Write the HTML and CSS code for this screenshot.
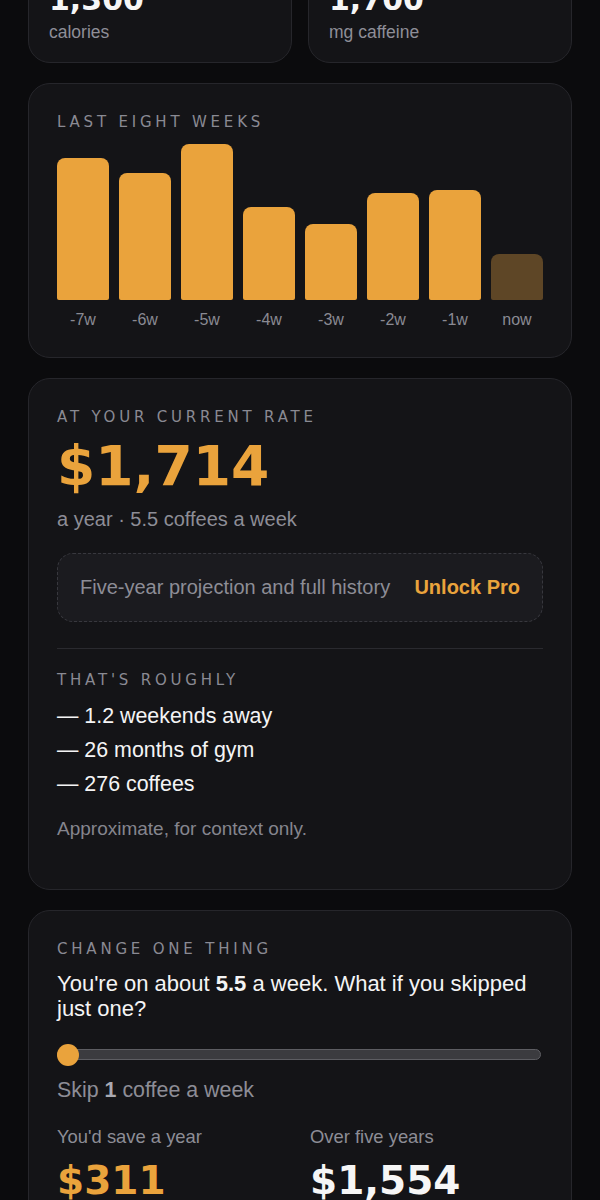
FILE: index.html
```html
<!DOCTYPE html>
<html lang="en">
<head>
<meta charset="utf-8">
<title>Coffee</title>
<link rel="stylesheet" href="styles.css">
</head>
<body>
<main class="page">
  <section class="stats">
    <div class="card stat">
      <div class="stat-num">1,300</div>
      <div class="stat-label">calories</div>
    </div>
    <div class="card stat">
      <div class="stat-num">1,700</div>
      <div class="stat-label">mg caffeine</div>
    </div>
  </section>

  <section class="card panel chart-card">
    <h2 class="label">Last eight weeks</h2>
    <div class="bars">
      <div class="bar" style="height:142px"></div>
      <div class="bar" style="height:127px"></div>
      <div class="bar" style="height:156px"></div>
      <div class="bar" style="height:93px"></div>
      <div class="bar" style="height:76px"></div>
      <div class="bar" style="height:107px"></div>
      <div class="bar" style="height:110px"></div>
      <div class="bar bar-now" style="height:46px"></div>
    </div>
    <div class="ticks">
      <span>-7w</span><span>-6w</span><span>-5w</span><span>-4w</span>
      <span>-3w</span><span>-2w</span><span>-1w</span><span>now</span>
    </div>
  </section>

  <section class="card panel rate-card">
    <h2 class="label">At your current rate</h2>
    <div class="big">$1,714</div>
    <p class="sub">a year · 5.5 coffees a week</p>
    <div class="pro">
      <span class="pro-text">Five-year projection and full history</span>
      <span class="pro-link">Unlock Pro</span>
    </div>
    <div class="divider"></div>
    <h2 class="label label-2">That's roughly</h2>
    <ul class="list">
      <li>— 1.2 weekends away</li>
      <li>— 26 months of gym</li>
      <li>— 276 coffees</li>
    </ul>
    <p class="note">Approximate, for context only.</p>
  </section>

  <section class="card panel change-card">
    <h2 class="label">Change one thing</h2>
    <p class="question">You're on about <b>5.5</b> a week. What if you skipped just one?</p>
    <div class="slider">
      <div class="track"></div>
      <div class="thumb"></div>
    </div>
    <p class="skip">Skip <b>1</b> coffee a week</p>
    <div class="results">
      <div class="result">
        <div class="result-label">You'd save a year</div>
        <div class="result-num accent">$311</div>
      </div>
      <div class="result">
        <div class="result-label">Over five years</div>
        <div class="result-num">$1,554</div>
      </div>
    </div>
  </section>
</main>
</body>
</html>
```

FILE: styles.css
```css
html, body {
  margin: 0;
  padding: 0;
  background: #0b0b0d;
}

body {
  font-family: "Liberation Sans", Arial, sans-serif;
  color: #f4f4f5;
}

.page {
  display: flex;
  flex-direction: column;
  gap: 20px;
  padding: 0 28px 60px;
}

.card {
  background: #141417;
  border: 1px solid #26262b;
  border-radius: 22px;
}

/* top stats */
.stats {
  display: grid;
  grid-template-columns: 1fr 1fr;
  gap: 16px;
  margin-top: -39px;
}

.stat {
  padding: 20px 20px 20px;
}

.stat-num {
  font: 700 30px/35px "DejaVu Sans", sans-serif;
  color: #f6f6f6;
}

.stat-label {
  margin-top: 5px;
  font-size: 17.5px;
  line-height: 20px;
  color: #8e8e97;
}

/* panels */
.panel {
  padding: 30px 28px 28px;
}

.label {
  margin: 0;
  font: 400 15px/17.5px "DejaVu Sans", sans-serif;
  letter-spacing: 3.8px;
  text-transform: uppercase;
  color: #8a8a93;
}

/* chart */
.bars {
  display: flex;
  align-items: flex-end;
  gap: 10px;
  height: 156px;
  margin-top: 12.5px;
}

.bar {
  flex: 1;
  background: #eaa33c;
  border-radius: 8px 8px 2px 2px;
}

.bar-now {
  background: #5e4626;
}

.ticks {
  display: flex;
  gap: 10px;
  margin-top: 11px;
}

.ticks span {
  flex: 1;
  text-align: center;
  font-size: 16px;
  line-height: 18.4px;
  color: #8a8a93;
}

/* rate */
.big {
  margin-top: 12px;
  font: 700 55px/55px "DejaVu Sans", sans-serif;
  color: #eaa33c;
}

.sub {
  margin: 14px 0 0;
  font-size: 20px;
  line-height: 23px;
  color: #8d8d96;
}

.pro {
  margin-top: 22.5px;
  display: flex;
  justify-content: space-between;
  align-items: center;
  padding: 22px 22px;
  border: 1px dashed #38383e;
  border-radius: 16px;
  background: #1b1b1f;
  font-size: 20px;
  line-height: 23px;
}

.pro-text {
  color: #8d8d96;
}

.pro-link {
  font-weight: 700;
  color: #eaa33c;
}

.divider {
  margin-top: 26px;
  height: 1px;
  background: #2a2a2f;
}

.label-2 {
  margin-top: 23px;
}

.list {
  list-style: none;
  margin: 9.5px 0 0;
  padding: 0;
}

.list li {
  font-size: 21.4px;
  line-height: 34px;
  color: #f4f4f5;
}

.note {
  margin: 16.5px 0 21.5px;
  font-size: 19px;
  line-height: 22px;
  color: #85858e;
}

/* change */
.question {
  margin: 11.8px 0 0;
  font-size: 22px;
  line-height: 25px;
  color: #f4f4f5;
}

.question b {
  font-weight: 700;
}

.slider {
  position: relative;
  margin-top: 23px;
  height: 22px;
  display: flex;
  align-items: center;
}

.track {
  flex: 1;
  height: 11px;
  box-sizing: border-box;
  margin-right: 2px;
  border-radius: 6px;
  background: #3b3b3f;
  border: 1.5px solid #5d5d62;
}

.thumb {
  position: absolute;
  left: 0;
  top: 0;
  width: 22px;
  height: 22px;
  border-radius: 50%;
  background: #eaa33c;
}

.skip {
  margin: 12px 0 0;
  font-size: 21.4px;
  line-height: 24px;
  color: #8d8d96;
}

.skip b {
  color: #a9a9b1;
}

.results {
  display: grid;
  grid-template-columns: 1fr 1fr;
  gap: 20px;
  margin-top: 24.6px;
}

.result-label {
  font-size: 18.4px;
  line-height: 21px;
  color: #8d8d96;
}

.result-num {
  margin-top: 14px;
  font: 700 39px/39px "DejaVu Sans", sans-serif;
  color: #f6f6f6;
}

.result-num.accent {
  color: #eaa33c;
}
```
